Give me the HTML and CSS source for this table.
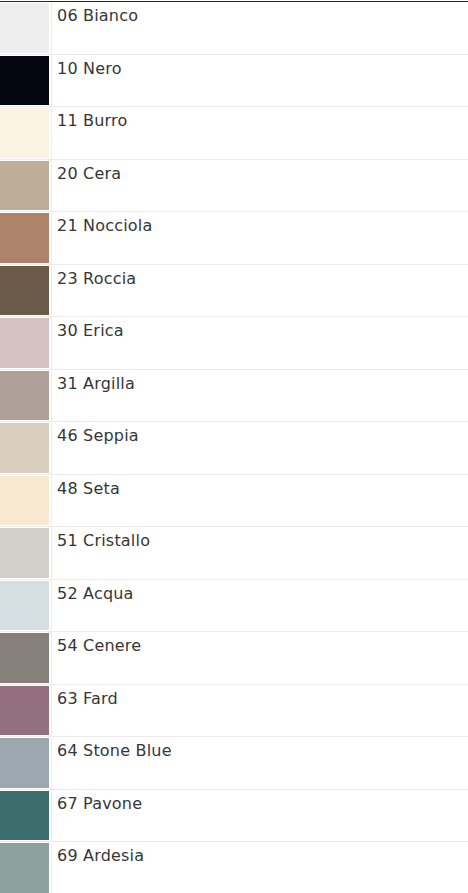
FILE: index.html
```html
<!DOCTYPE html>
<html lang="it">
<head>
<meta charset="utf-8">
<link rel="stylesheet" href="styles.css">
</head>
<body>
<div class="list">
  <div class="row"><div class="cell-sw"><div class="sw" style="background:#eeeeee"></div></div><div class="name">06 Bianco</div></div>
  <div class="row"><div class="cell-sw"><div class="sw" style="background:#05050f"></div></div><div class="name">10 Nero</div></div>
  <div class="row"><div class="cell-sw"><div class="sw" style="background:#fbf3e4"></div></div><div class="name">11 Burro</div></div>
  <div class="row"><div class="cell-sw"><div class="sw" style="background:#bcae98"></div></div><div class="name">20 Cera</div></div>
  <div class="row"><div class="cell-sw"><div class="sw" style="background:#ad8469"></div></div><div class="name">21 Nocciola</div></div>
  <div class="row"><div class="cell-sw"><div class="sw" style="background:#6b5a48"></div></div><div class="name">23 Roccia</div></div>
  <div class="row"><div class="cell-sw"><div class="sw" style="background:#d6c2c2"></div></div><div class="name">30 Erica</div></div>
  <div class="row"><div class="cell-sw"><div class="sw" style="background:#afa19a"></div></div><div class="name">31 Argilla</div></div>
  <div class="row"><div class="cell-sw"><div class="sw" style="background:#d8cdbf"></div></div><div class="name">46 Seppia</div></div>
  <div class="row"><div class="cell-sw"><div class="sw" style="background:#f6e9cf"></div></div><div class="name">48 Seta</div></div>
  <div class="row"><div class="cell-sw"><div class="sw" style="background:#d3d0cb"></div></div><div class="name">51 Cristallo</div></div>
  <div class="row"><div class="cell-sw"><div class="sw" style="background:#d6e0e4"></div></div><div class="name">52 Acqua</div></div>
  <div class="row"><div class="cell-sw"><div class="sw" style="background:#87807a"></div></div><div class="name">54 Cenere</div></div>
  <div class="row"><div class="cell-sw"><div class="sw" style="background:#94707f"></div></div><div class="name">63 Fard</div></div>
  <div class="row"><div class="cell-sw"><div class="sw" style="background:#9ba8b0"></div></div><div class="name">64 Stone Blue</div></div>
  <div class="row"><div class="cell-sw"><div class="sw" style="background:#3e6d6e"></div></div><div class="name">67 Pavone</div></div>
  <div class="row"><div class="cell-sw"><div class="sw" style="background:#8fa19e"></div></div><div class="name">69 Ardesia</div></div>
</div>
</body>
</html>
```
FILE: styles.css
```css
html, body {
  margin: 0;
  padding: 0;
  background: #ffffff;
}
body {
  font-family: "DejaVu Sans", "Noto Sans", sans-serif;
  color: #363636;
}
.list {
  margin-top: 1px;
  border-top: 1px solid #1e2a24;
  display: flex;
  flex-direction: column;
}
.row {
  display: flex;
  border-bottom: 1px solid #ececec;
  height: 52.5px;
  box-sizing: border-box;
}
.cell-sw {
  width: 50px;
  padding: 1px 1px 1px 0;
  border-right: 1px solid #ececec;
  box-sizing: content-box;
}
.sw {
  width: 49px;
  height: 49.5px;
}
.name {
  padding: 4px 0 0 5px;
  font-size: 16px;
  line-height: 20px;
  letter-spacing: 0.2px;
}
```
